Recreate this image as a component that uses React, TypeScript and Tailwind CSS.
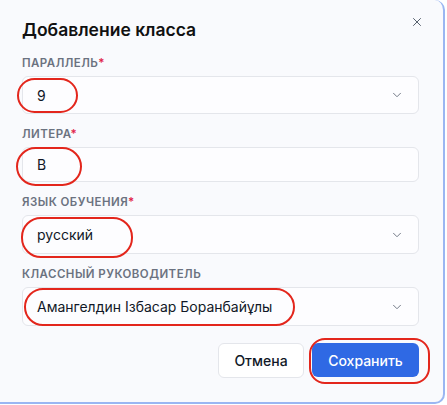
import { ChevronDown, X } from "lucide-react";

const font = { fontFamily: "Inter, 'Noto Sans', sans-serif" };

function Label({ text, required }: { text: string; required?: boolean }) {
  return (
    <div className="text-[11.5px] leading-4 font-semibold tracking-[0.04em] text-[#6b7280] uppercase">
      {text}
      {required && <span className="text-[#e11d48]">*</span>}
    </div>
  );
}

function SelectBox({ value, h = "h-[38px]" }: { value: string; h?: string }) {
  return (
    <div
      className={`mt-[5px] ${h} flex items-center justify-between rounded-md border border-[#e4e6eb] bg-[#fdfdff] pl-[14px] pr-[14px]`}
    >
      <span className="text-[14px] text-[#111827]">{value}</span>
      <ChevronDown className="w-[14px] h-[14px] text-[#6b7280]" strokeWidth={1.6} />
    </div>
  );
}

export default function App() {
  return (
    <div className="w-[447px] h-[405px] bg-white" style={font}>
      <div className="relative w-[445px] h-[404px] bg-[#f9fafd] border-r-2 border-b-2 border-[#9ab6f2] rounded-r-[10px] pl-[22px] pr-[24px] pt-[16px]">
        <button className="absolute right-[19px] top-[15px] text-[#4b5563]">
          <X className="w-[14px] h-[14px]" strokeWidth={1.6} />
        </button>

        <h2 className="text-[17.5px] leading-[28px] font-semibold text-[#111111]">
          Добавление класса
        </h2>

        <div className="mt-[11px]">
          <Label text="Параллель" required />
          <SelectBox value="9" />
        </div>

        <div className="mt-[12px]">
          <Label text="Литера" required />
          <div className="mt-[5px] h-[35px] flex items-center rounded-md border border-[#e4e6eb] bg-[#fdfdff] px-[14px]">
            <span className="text-[14px] text-[#111827]">В</span>
          </div>
        </div>

        <div className="mt-[12px]">
          <Label text="Язык обучения" required />
          <SelectBox value="русский" h="h-[39px]" />
        </div>

        <div className="mt-[12px]">
          <Label text="Классный руководитель" />
          <SelectBox value="Амангелдин Ізбасар Боранбайұлы" h="h-[39px]" />
        </div>

        <div className="mt-[17px] flex justify-end gap-2">
          <button className="h-[35px] w-[86px] rounded-md border border-[#e4e6eb] bg-white text-[14px] font-medium text-[#111827]">
            Отмена
          </button>
          <button className="h-[34px] w-[107px] rounded-md bg-[#2f69e4] text-[14px] font-medium text-white">
            Сохранить
          </button>
        </div>

        {/* red annotation marks */}
        <div className="absolute left-[17px] top-[78px] w-[61px] h-[35px] rounded-[18px] border-2 border-[#e3261c] pointer-events-none" />
        <div className="absolute left-[16px] top-[147px] w-[66px] h-[39px] rounded-[20px] border-2 border-[#e3261c] pointer-events-none" />
        <div className="absolute left-[21px] top-[217px] w-[112px] h-[41px] rounded-[20px] border-2 border-[#e3261c] pointer-events-none" />
        <div className="absolute left-[24px] top-[288px] w-[271px] h-[38px] rounded-[19px] border-2 border-[#e3261c] pointer-events-none" />
        <div className="absolute left-[309px] top-[338px] w-[121px] h-[46px] rounded-[16px] border-2 border-[#e3261c] pointer-events-none" />
      </div>
    </div>
  );
}
